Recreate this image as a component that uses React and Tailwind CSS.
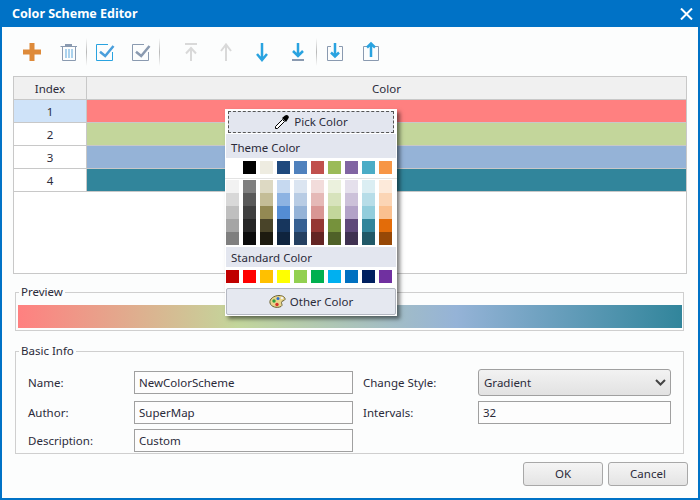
const themeColors = ['bg-[#ffffff]', 'bg-[#000000]', 'bg-[#eeece1]', 'bg-[#1f497d]', 'bg-[#4f81bd]', 'bg-[#c0504d]', 'bg-[#9bbb59]', 'bg-[#8064a2]', 'bg-[#4bacc6]', 'bg-[#f79646]'];

const shadeColumns = [
  ['bg-[#f2f2f2]', 'bg-[#d8d8d8]', 'bg-[#bfbfbf]', 'bg-[#a5a5a5]', 'bg-[#7f7f7f]'],
  ['bg-[#7f7f7f]', 'bg-[#595959]', 'bg-[#3f3f3f]', 'bg-[#262626]', 'bg-[#0c0c0c]'],
  ['bg-[#ddd9c3]', 'bg-[#c4bd97]', 'bg-[#938953]', 'bg-[#494429]', 'bg-[#1d1b10]'],
  ['bg-[#c6d9f0]', 'bg-[#8db3e2]', 'bg-[#548dd4]', 'bg-[#17365d]', 'bg-[#0f243e]'],
  ['bg-[#dbe5f1]', 'bg-[#b8cce4]', 'bg-[#95b3d7]', 'bg-[#366092]', 'bg-[#244061]'],
  ['bg-[#f2dcdb]', 'bg-[#e5b9b7]', 'bg-[#d99694]', 'bg-[#953734]', 'bg-[#632423]'],
  ['bg-[#ebf1dd]', 'bg-[#d7e3bc]', 'bg-[#c3d69b]', 'bg-[#76923c]', 'bg-[#4f6128]'],
  ['bg-[#e5e0ec]', 'bg-[#ccc1d9]', 'bg-[#b2a2c7]', 'bg-[#5f497a]', 'bg-[#3f3151]'],
  ['bg-[#dbeef3]', 'bg-[#b7dde8]', 'bg-[#92cddc]', 'bg-[#31859b]', 'bg-[#205867]'],
  ['bg-[#fdeada]', 'bg-[#fbd5b5]', 'bg-[#fac08f]', 'bg-[#e36c09]', 'bg-[#974806]'],
];

const standardColors = ['bg-[#c00000]', 'bg-[#ff0000]', 'bg-[#ffc000]', 'bg-[#ffff00]', 'bg-[#92d050]', 'bg-[#00b050]', 'bg-[#00b0f0]', 'bg-[#0070c0]', 'bg-[#002060]', 'bg-[#7030a0]'];

const rows = [
  { index: 1, color: 'bg-[#ff8080]', selected: true },
  { index: 2, color: 'bg-[#c3d69b]' },
  { index: 3, color: 'bg-[#95b3d7]' },
  { index: 4, color: 'bg-[#31859b]' },
];

const BLUE = '#29a3e0';
const GRAY = '#8a9ab0';
const FADED = '#d9d9d9';

const ToolIcon = ({ children }) => (
  <div className="w-[36px] h-[28px] flex items-center justify-center">
    <svg width="24" height="24" viewBox="0 0 24 24" fill="none">{children}</svg>
  </div>
);

const Separator = () => (
  <div className="w-px h-[28px] bg-gradient-to-b from-[#fcfdfd] via-[#b8b8b8] to-[#fcfdfd]" />
);

const CheckIcon = ({ box, tick }) => (
  <ToolIcon>
    <path d="M15 4.5H3.5V20.5H19.5V12" stroke={box} />
    <path d="M7 11.7L12.2 16L20.5 6" stroke={tick} strokeWidth="2.5" />
  </ToolIcon>
);

const Toolbar = () => (
  <div className="h-[49px] flex items-start pt-[11px] pl-[1px]">
    <ToolIcon>
      <rect x="3" y="9.5" width="18" height="5" fill="#de8a3a" />
      <rect x="9.5" y="3" width="5" height="18" fill="#de8a3a" />
    </ToolIcon>
    <ToolIcon>
      <rect x="9" y="4" width="7" height="2" fill={GRAY} />
      <path d="M4.5 6.5H21" stroke={GRAY} />
      <path d="M6.5 7V20.5H19.5V7" stroke={GRAY} />
      <path d="M10 9V18M13 9V18M16 9V18" stroke="#5ba7dd" />
    </ToolIcon>
    <Separator />
    <CheckIcon box={BLUE} tick="#4a9fdc" />
    <CheckIcon box={GRAY} tick={GRAY} />
    <Separator />
    <div className="ml-[12px]" />
    <ToolIcon>
      <rect x="7" y="3" width="12" height="2" fill={FADED} />
      <path d="M13 8V21M8 13.5L13 8L18 13.5" stroke={FADED} strokeWidth="2" />
    </ToolIcon>
    <ToolIcon>
      <path d="M12 4V21M7 11L12 4.5L17 11" stroke={FADED} strokeWidth="2" />
    </ToolIcon>
    <ToolIcon>
      <path d="M12 3V20M7 14L12 20L17 14" stroke={BLUE} strokeWidth="2.5" />
    </ToolIcon>
    <ToolIcon>
      <path d="M12 3V15M7 11L12 16L17 11" stroke={BLUE} strokeWidth="2.5" />
      <rect x="6" y="19" width="12" height="2" fill={GRAY} />
    </ToolIcon>
    <Separator />
    <ToolIcon>
      <path d="M8 6.5H4.5V20.5H19.5V6.5H16" stroke={GRAY} />
      <path d="M12 3V16M8 12.5L12 16.5L16 12.5" stroke={BLUE} strokeWidth="2.5" />
    </ToolIcon>
    <ToolIcon>
      <path d="M8 6.5H4.5V20.5H19.5V6.5H16" stroke={GRAY} />
      <path d="M12 17V4M8 7.5L12 3.5L16 7.5" stroke={BLUE} strokeWidth="2.5" />
    </ToolIcon>
  </div>
);

const ColorPopup = () => (
  <div className="absolute left-[223px] top-[109px] w-[172px] h-[207px] bg-white pt-[2px] shadow-[3px_3px_4px_rgba(0,0,0,0.5)]">
    <div className="mx-[3px] h-[22px] flex items-center justify-center gap-[4px] bg-[#e3e6ef] border border-dashed border-[#555]">
      <svg width="16" height="16" viewBox="0 0 16 16">
        <path d="M1.5 14.5V12.5L8.5 5.5L10.5 7.5L3.5 14.5Z" fill="#fff" stroke="#000" />
        <path d="M8 4L11 1.5Q13 .5 14.5 2Q15.5 3.5 14 5L12 8Z" fill="#000" />
      </svg>
      <span>Pick Color</span>
    </div>
    <div className="mt-[1px] mx-[1px] h-[24px] flex items-center pl-[5px] pt-[3px] bg-[#e3e6ef]">Theme Color</div>
    <div className="mt-[3px] ml-[1px] flex gap-[4px]">
      {themeColors.map((c, i) => (
        <div key={i} className={`w-[13px] h-[13px] ${c}`} />
      ))}
    </div>
    <div className="mt-[4px] h-px bg-[#e3e3e3]" />
    <div className="mt-[1px] ml-[1px] flex gap-[4px]">
      {shadeColumns.map((col, i) => (
        <div key={i} className="flex flex-col">
          {col.map((c, j) => (
            <div key={j} className={`w-[13px] h-[13px] ${c}`} />
          ))}
        </div>
      ))}
    </div>
    <div className="mt-[2px] mx-[1px] h-[20px] flex items-center pl-[5px] pt-[1px] bg-[#e3e6ef]">Standard Color</div>
    <div className="mt-[3px] ml-[1px] flex gap-[4px]">
      {standardColors.map((c, i) => (
        <div key={i} className={`w-[13px] h-[13px] ${c}`} />
      ))}
    </div>
    <div className="mt-[5px] mx-[1px] h-[27px] flex items-center justify-center gap-[4px] rounded-[2px] bg-[#e5e8f0] border border-[#b4b8c2]">
      <svg width="17" height="13" viewBox="0 0 17 13">
        <path d="M1 8C0 4 5 .5 10 .5C14 .5 16.5 2.5 16 4.5C15.5 6 12.5 5.5 12.5 7.5C12.5 9.5 14 10 12 11.5C8 13.5 2 12 1 8Z" fill="#e8d58a" stroke="#6b6236" />
        <circle cx="5" cy="6" r="1.7" fill="#2f9e3f" />
        <circle cx="9" cy="3.5" r="1.5" fill="#2f6fd0" />
        <circle cx="8" cy="9.5" r="1.7" fill="#d8322a" />
        <circle cx="13" cy="3" r="1.2" fill="#f2f2f2" />
      </svg>
      <span>Other Color</span>
    </div>
  </div>
);

const Field = ({ value }) => (
  <div className="h-[23px] flex items-center pl-[4px] bg-[#fdfdfd] border border-[#a0a0a0]">{value}</div>
);

const App = () => {
  return (
    <div className="relative w-[700px] h-[500px] flex flex-col bg-[#fcfdfd] border-x-2 border-b-2 border-[#0072c6] text-[11.5px] text-[#2b2b3a] font-['Noto_Sans',sans-serif]">
      {/* Title bar */}
      <div className="h-[27px] -mx-[2px] pl-[12px] pr-[7px] pt-[1px] flex items-center justify-between bg-[#0072c6] text-white">
        <span className="font-bold text-[12.5px]">Color Scheme Editor</span>
        <svg width="13" height="12" viewBox="0 0 13 12">
          <path d="M1 .5L12 11.5M12 .5L1 11.5" stroke="#fff" strokeWidth="2" />
        </svg>
      </div>

      <div className="flex-1 flex flex-col px-[11px]">
        <Toolbar />

        {/* Color table */}
        <div className="h-[198px] flex flex-col border border-[#c8c8c8] bg-white">
          <div className="h-[23px] flex bg-[#f0f0f0] border-b border-[#c8c8c8]">
            <div className="w-[73px] pt-[1px] flex items-center justify-center border-r border-[#c8c8c8]">Index</div>
            <div className="flex-1 pt-[1px] flex items-center justify-center">Color</div>
          </div>
          {rows.map((row) => (
            <div key={row.index} className="h-[23px] flex border-b border-[#c8c8c8]">
              <div className={`w-[73px] pt-[1px] flex items-center justify-center border-r border-[#c8c8c8] ${row.selected ? 'bg-[#cfe3f9]' : 'bg-white'}`}>
                {row.index}
              </div>
              <div className={`flex-1 ${row.color}`} />
            </div>
          ))}
        </div>

        {/* Preview */}
        <fieldset className="mt-[9px] ml-[2px] mr-[3px] pl-[2px] pr-[1px] pt-[4px] pb-[2px] border border-[#cfcfcf]">
          <legend className="ml-[1px] px-[2px] h-[18px] leading-[18px]">Preview</legend>
          <div className="h-[23px] bg-[linear-gradient(to_right,#ff8080_0%,#c3d69b_33%,#95b3d7_66%,#31859b_100%)]" />
        </fieldset>

        {/* Basic info */}
        <fieldset className="mt-[11px] ml-[2px] mr-[3px] pl-[12px] pt-[9px] pb-[1px] border border-[#cfcfcf]">
          <legend className="-ml-[9px] px-[2px] h-[18px] leading-[18px]">Basic Info</legend>
          <div className="grid grid-cols-[106px_219px_125px_193px] grid-rows-[27px_23px_23px] gap-y-[5px] items-center">
            <div>Name:</div>
            <Field value="NewColorScheme" />
            <div className="pl-[10px]">Change Style:</div>
            <div className="h-[27px] flex items-center justify-between pl-[5px] pr-[4px] rounded-[3px] border border-[#a0a0a0] bg-gradient-to-b from-[#f2f2f2] to-[#e2e2e2]">
              <span>Gradient</span>
              <svg width="11" height="7" viewBox="0 0 11 7">
                <path d="M1 1L5.5 5.5L10 1" fill="none" stroke="#444" strokeWidth="2" />
              </svg>
            </div>
            <div>Author:</div>
            <Field value="SuperMap" />
            <div className="pl-[10px]">Intervals:</div>
            <Field value="32" />
            <div>Description:</div>
            <Field value="Custom" />
          </div>
        </fieldset>

        {/* Dialog buttons */}
        <div className="mt-[8px] flex justify-end gap-[5px] -mr-[1px]">
          <button className="w-[80px] h-[24px] rounded-[3px] border border-[#a8a8a8] bg-gradient-to-b from-[#f5f5f5] to-[#e4e4e4]">OK</button>
          <button className="w-[80px] h-[24px] rounded-[3px] border border-[#a8a8a8] bg-gradient-to-b from-[#f5f5f5] to-[#e4e4e4]">Cancel</button>
        </div>
      </div>

      <ColorPopup />
    </div>
  );
};

export default App;
